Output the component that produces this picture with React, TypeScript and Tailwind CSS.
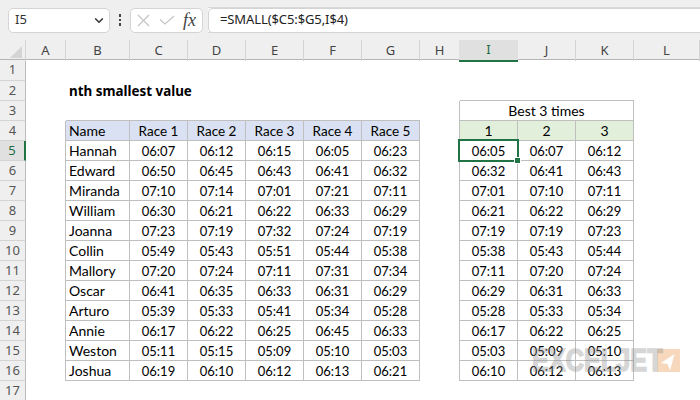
const columns = ["A", "B", "C", "D", "E", "F", "G", "H", "I", "J", "K", "L"];

const races = [
  ["Hannah", "06:07", "06:12", "06:15", "06:05", "06:23"],
  ["Edward", "06:50", "06:45", "06:43", "06:41", "06:32"],
  ["Miranda", "07:10", "07:14", "07:01", "07:21", "07:11"],
  ["William", "06:30", "06:21", "06:22", "06:33", "06:29"],
  ["Joanna", "07:23", "07:19", "07:32", "07:24", "07:19"],
  ["Collin", "05:49", "05:43", "05:51", "05:44", "05:38"],
  ["Mallory", "07:20", "07:24", "07:11", "07:31", "07:34"],
  ["Oscar", "06:41", "06:35", "06:33", "06:31", "06:29"],
  ["Arturo", "05:39", "05:33", "05:41", "05:34", "05:28"],
  ["Annie", "06:17", "06:22", "06:25", "06:45", "06:33"],
  ["Weston", "05:11", "05:15", "05:09", "05:10", "05:03"],
  ["Joshua", "06:19", "06:10", "06:12", "06:13", "06:21"],
];

const best = [
  ["06:05", "06:07", "06:12"],
  ["06:32", "06:41", "06:43"],
  ["07:01", "07:10", "07:11"],
  ["06:21", "06:22", "06:29"],
  ["07:19", "07:19", "07:23"],
  ["05:38", "05:43", "05:44"],
  ["07:11", "07:20", "07:24"],
  ["06:29", "06:31", "06:33"],
  ["05:28", "05:33", "05:34"],
  ["06:17", "06:22", "06:25"],
  ["05:03", "05:09", "05:10"],
  ["06:10", "06:12", "06:13"],
];

const gridCols = "grid grid-cols-[26px_40px_64px_58px_58px_58px_58px_58px_40px_58px_58px_58px_66px]";
const line = "border-r border-b border-[#bfbfbf]";

function RowHeader({ n }: { n: number }) {
  const active = n === 5;
  return (
    <div
      className={`${n === 1 ? "h-[21px]" : "h-5"} flex items-center justify-center border-b border-[#d4d4d4] text-[13px] font-['Noto_Sans',sans-serif] ${
        active
          ? "bg-[#e0e0e0] border-r-2 border-r-[#217346] text-[#1e6b43]"
          : "bg-[#efefef] border-r border-r-[#bdbdbd] text-[#555555]"
      }`}
    >
      {n}
    </div>
  );
}

function Cell({ children, className = "" }: { children?: React.ReactNode; className?: string }) {
  return (
    <div className={`h-5 flex items-center pt-px font-['Lato',sans-serif] text-black leading-[18px] ${className}`}>
      {children}
    </div>
  );
}

export default function App() {
  return (
    <div className="w-[700px] h-[400px] overflow-hidden bg-white relative">
      {/* toolbar */}
      <div className="h-10 bg-[#efefef] pt-[7px]">
        <div className="h-[26px] flex items-center bg-white border-t border-b border-[#d9d9d9] relative">
          <div className="absolute inset-y-[-1px] left-0 w-[208px] bg-[#efefef]" />
          <div className="relative ml-2 w-[102px] h-[25px] bg-white border border-[#d4d4d4] rounded-[5px] flex items-center justify-between pl-[6px] pr-[5px] text-[13px] text-[#333333] font-['Noto_Sans',sans-serif]">
            <span>I5</span>
            <svg width="10" height="7" viewBox="0 0 10 7" fill="none" stroke="#333333" strokeWidth="1.6">
              <path d="M1.2 1.5 5 5.2 8.8 1.5" />
            </svg>
          </div>
          <div className="relative w-[20px] flex flex-col items-center gap-[2px]">
            <span className="w-[2.5px] h-[2.5px] bg-[#444444]" />
            <span className="w-[2.5px] h-[2.5px] bg-[#444444]" />
            <span className="w-[2.5px] h-[2.5px] bg-[#444444]" />
          </div>
          <div className="relative w-[73px] h-[25px] bg-white border border-[#d4d4d4] rounded-[5px] flex items-center pl-[6px]">
            <svg width="13" height="13" viewBox="0 0 13 13" fill="none" stroke="#c4c4c4" strokeWidth="1.2">
              <path d="M1 1 12 12M12 1 1 12" />
            </svg>
            <svg className="ml-[9px]" width="16" height="10" viewBox="0 0 16 10" fill="none" stroke="#c4c4c4" strokeWidth="1.2">
              <path d="M1 4.5 6 9 15 1" />
            </svg>
            <span className="ml-[8px] text-[18px] leading-none italic text-[#444444] font-['Liberation_Serif',serif]">fx</span>
          </div>
          <div className="relative ml-[5px] flex-1 h-[25px] bg-white border border-r-0 border-[#d4d4d4] rounded-l-[5px] flex items-center pl-[11px] text-[13px] tracking-[-0.1px] text-[#222222] font-['Noto_Sans',sans-serif]">
            =SMALL($C5:$G5,I$4)
          </div>
        </div>
      </div>

      {/* column letters */}
      <div className={`${gridCols} h-5 bg-[#efefef] border-b border-[#b5b5b5]`}>
        <div className="relative border-r border-[#d4d4d4]">
          <div className="absolute right-[3px] bottom-[3px] w-0 h-0 border-l-[12px] border-l-transparent border-b-[12px] border-b-[#d4d4d4]" />
        </div>
        {columns.map((c) => (
          <div
            key={c}
            className={`flex items-center justify-center text-[13px] font-['Noto_Sans',sans-serif] ${
              c === "I"
                ? "bg-[#e0e0e0] border-b-2 border-[#217346] text-[#1e6b43] -mb-px -ml-px"
                : "border-r border-[#d4d4d4] text-[#444444]"
            }`}
          >
            {c}
          </div>
        ))}
      </div>

      {/* sheet */}
      <div className={gridCols}>
        <RowHeader n={1} />
        <div className="col-span-12" />

        <RowHeader n={2} />
        <div />
        <div className="col-span-7 h-5 flex items-center pl-[3px] pt-px text-[13.4px] font-bold text-black whitespace-nowrap font-['Noto_Sans',sans-serif]">
          nth smallest value
        </div>
        <div className="col-span-3 border-b border-[#bfbfbf]" />
        <div />

        <RowHeader n={3} />
        <div />
        <div className="col-span-6 border-b border-[#bfbfbf]" />
        <div className="border-r border-[#bfbfbf]" />
        <Cell className={`col-span-3 justify-center text-[14px] ${line}`}>Best 3 times</Cell>
        <div />

        <RowHeader n={4} />
        <div className="border-r border-[#bfbfbf]" />
        {["Name", "Race 1", "Race 2", "Race 3", "Race 4", "Race 5"].map((h, i) => (
          <Cell key={h} className={`${line} bg-[#d9e1f2] ${i === 0 ? "pl-[3px] text-[14px]" : "justify-center text-[13.5px]"}`}>
            {h}
          </Cell>
        ))}
        <div className="border-r border-[#bfbfbf]" />
        {["1", "2", "3"].map((h) => (
          <Cell key={h} className={`${line} bg-[#e2efda] justify-center text-[14px]`}>
            {h}
          </Cell>
        ))}
        <div />

        {races.map((row, r) => (
          <div key={row[0]} className="contents">
            <RowHeader n={r + 5} />
            <div className="border-r border-[#bfbfbf]" />
            {row.map((v, i) => (
              <Cell key={i} className={`${line} ${i === 0 ? "pl-[3px] text-[14px]" : "justify-center text-[13px]"}`}>
                {v}
              </Cell>
            ))}
            <div className="border-r border-[#bfbfbf]" />
            {best[r].map((v, i) => (
              <Cell key={i} className={`${line} justify-center text-[13px]`}>
                {v}
              </Cell>
            ))}
            <div />
          </div>
        ))}

        <RowHeader n={17} />
        <div className="col-span-12" />
      </div>

      {/* active cell */}
      <div className="absolute left-[458px] top-[139px] w-[61px] h-[23px] border-2 border-[#217346]" />
      <div className="absolute left-[515px] top-[158px] w-[5px] h-[5px] bg-[#217346] outline-1 outline-white" />

      {/* watermark */}
      <div className="absolute left-[532px] top-[349px] flex items-center pointer-events-none">
        <span className="w-[125px] font-['Liberation_Sans',sans-serif] font-bold text-[32px] leading-[23px] origin-left scale-x-[0.79] whitespace-nowrap text-[#8c8c8c] [-webkit-text-stroke:1.5px_#8c8c8c] opacity-35">
          EXCELJET
        </span>
        <svg width="23" height="23" viewBox="0 0 23 23">
          <rect width="23" height="23" fill="#f8d8bd" />
          <path d="M17.5 5 4 14 10.5 15 13 21.5Z" fill="#ffffff" />
        </svg>
      </div>
    </div>
  );
}
